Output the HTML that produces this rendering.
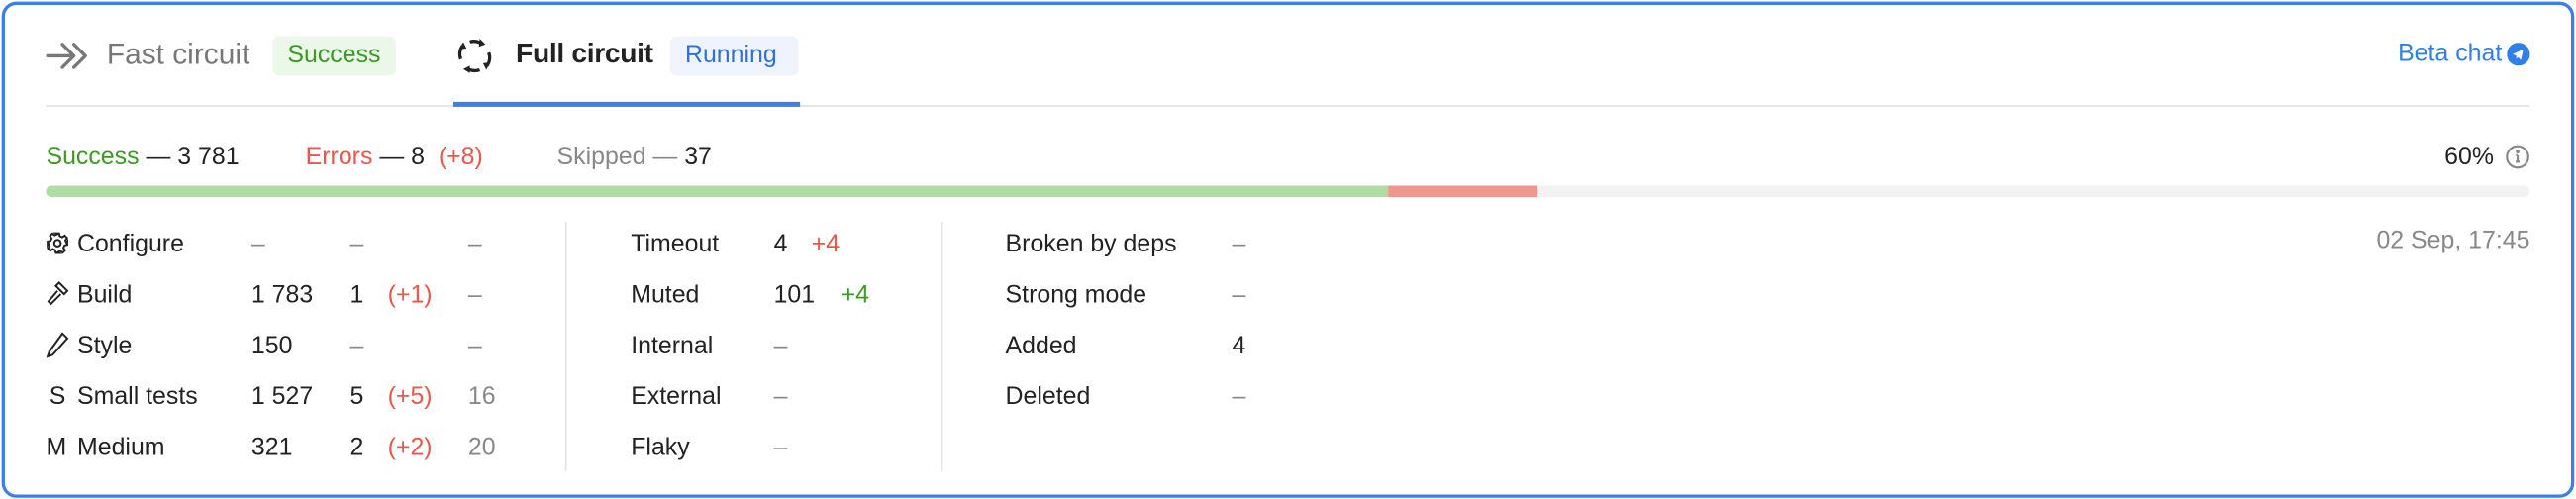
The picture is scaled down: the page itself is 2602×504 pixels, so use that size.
<!DOCTYPE html>
<html><head><meta charset="utf-8"><style>
html,body{margin:0;padding:0;background:#fff;}
body{width:2602px;height:504px;overflow:hidden;}
#w{position:absolute;left:0;top:0;width:1568px;height:304px;transform:scale(1.6594);transform-origin:0 0;font-family:"Liberation Sans",sans-serif;font-size:15px;color:#222;}
.box{position:absolute;left:1px;top:1px;width:1562px;height:298px;border:2px solid #3a80e8;border-radius:9px;}
.a{position:absolute;white-space:nowrap;line-height:18px;}
.g{color:#3a9a22}.r{color:#e8574a}.gr{color:#888}
.dv{position:absolute;width:1px;background:#e4e4e4;top:135px;height:152px;}
</style></head><body><div id="w">
<div class="box"></div>
<svg style="position:absolute;left:28px;top:25px" width="25" height="18" viewBox="0 0 25 18" fill="none" stroke="#777" stroke-width="2" stroke-linecap="round" stroke-linejoin="round"><path d="M1 9h15M10 2l7 7-7 7M17 2l7 7-7 7"/></svg>
<div class="a gr" style="left:65px;top:24px;font-size:18px;color:#777">Fast circuit</div>
<div class="a" style="left:166px;top:22px;width:75px;height:24px;background:#ebf7e9;border-radius:4px;"></div>
<div class="a g" style="left:175px;top:25px;">Success</div>
<svg style="position:absolute;left:277px;top:22px" width="24" height="24" viewBox="0 0 24 24" fill="none" stroke="#222" stroke-width="2"><path d="M9 3.5A8.5 8.5 0 0 1 16 4.5M20.5 10a8.5 8.5 0 0 1-1 8M15 20.5a8.5 8.5 0 0 1-7-.5M3.5 14a8.5 8.5 0 0 1 1-8"/><path d="M15 1.5l3.5 3.5-4 1.5zM21.5 16l-2.5 4.5-2-4zM9 22.5l-4-2.5 4-2zM2.5 8l2.5-4.5 2 4z" fill="#222" stroke="none"/></svg>
<div class="a" style="left:314px;top:24px;font-size:17px;font-weight:bold;letter-spacing:-0.2px;color:#222">Full circuit</div>
<div class="a" style="left:408px;top:22px;width:78px;height:24px;background:#eef3fc;border-radius:4px;"></div>
<div class="a" style="left:417px;top:25px;color:#3070d8">Running</div>
<div class="a" style="left:28px;top:64px;width:1512px;height:1px;background:#e0e0e0"></div>
<div class="a" style="left:276px;top:62px;width:211px;height:3px;background:#3a80e8"></div>
<div class="a" style="right:45px;top:24px;color:#2f7fe8">Beta chat</div>
<svg style="position:absolute;left:1526px;top:26px" width="14" height="14" viewBox="0 0 14 14"><circle cx="7" cy="7" r="7" fill="#2f7fe8"/><path d="M3.5 7l6.5-3-1.5 6.5-1.8-1.8-1 1.3v-2z" fill="#fff"/></svg>
<div class="a" style="left:28px;top:87px"><span class="g">Success</span> — 3 781</div>
<div class="a" style="left:186px;top:87px"><span class="r">Errors</span> — 8 &nbsp;<span class="r">(+8)</span></div>
<div class="a" style="left:339px;top:87px"><span class="gr">Skipped —</span> 37</div>
<div class="a" style="right:50px;top:87px">60%</div>
<svg style="position:absolute;left:1525px;top:88px" width="15" height="15" viewBox="0 0 15 15" fill="none" stroke="#888" stroke-width="1.3"><circle cx="7.5" cy="7.5" r="6.5"/><path d="M7.5 6.5v4M6.3 10.5h2.4M6.5 6.5h1" /><circle cx="7.5" cy="4.3" r=".5" fill="#888"/></svg>
<div class="a" style="left:28px;top:113px;width:1512px;height:7px;background:#f2f2f2;border-radius:4px;overflow:hidden"><div style="position:absolute;left:0;width:817px;height:7px;background:#b0dca4"></div><div style="position:absolute;left:817px;width:91px;height:7px;background:#f0968a"></div></div>
<svg style="position:absolute;left:28px;top:141px" width="14" height="14" viewBox="0 0 14 14" fill="none" stroke="#222" stroke-width="1.2"><circle cx="7" cy="7" r="2"/><path d="M6 1h2l.4 1.7 1.5.7 1.5-1 1.4 1.4-1 1.5.7 1.5L13 6v2l-1.7.4-.7 1.5 1 1.5-1.4 1.4-1.5-1-1.5.7L8 13H6l-.4-1.7-1.5-.7-1.5 1-1.4-1.4 1-1.5-.7-1.5L1 8V6l1.7-.4.7-1.5-1-1.5 1.4-1.4 1.5 1 1.5-.7z"/></svg>
<svg style="position:absolute;left:28px;top:171px" width="14" height="16" viewBox="0 0 14 16" fill="none" stroke="#222" stroke-width="1.2"><path d="M8 1l5 5-2 2-5-5zM7 6L1.5 12.5l1.5 1.5L9 8"/></svg>
<svg style="position:absolute;left:28px;top:202px" width="14" height="16" viewBox="0 0 14 16" fill="none" stroke="#222" stroke-width="1.2"><path d="M10 1l3 3-9 10-3 1 1-3z"/></svg>
<div class="a" style="left:30px;top:233px">S</div>
<div class="a" style="left:28px;top:264px">M</div>
<div class="a" style="left:47px;top:140px">Configure</div>
<div class="a" style="left:47px;top:171px">Build</div>
<div class="a" style="left:47px;top:202px">Style</div>
<div class="a" style="left:47px;top:233px">Small tests</div>
<div class="a" style="left:47px;top:264px">Medium</div>
<div class="a gr" style="left:153px;top:140px">–</div><div class="a gr" style="left:213px;top:140px">–</div><div class="a gr" style="left:285px;top:140px">–</div>
<div class="a" style="left:153px;top:171px">1 783</div><div class="a" style="left:213px;top:171px">1</div><div class="a r" style="left:236px;top:171px">(+1)</div><div class="a gr" style="left:285px;top:171px">–</div>
<div class="a" style="left:153px;top:202px">150</div><div class="a gr" style="left:213px;top:202px">–</div><div class="a gr" style="left:285px;top:202px">–</div>
<div class="a" style="left:153px;top:233px">1 527</div><div class="a" style="left:213px;top:233px">5</div><div class="a r" style="left:236px;top:233px">(+5)</div><div class="a gr" style="left:285px;top:233px">16</div>
<div class="a" style="left:153px;top:264px">321</div><div class="a" style="left:213px;top:264px">2</div><div class="a r" style="left:236px;top:264px">(+2)</div><div class="a gr" style="left:285px;top:264px">20</div>
<div class="dv" style="left:344px"></div>
<div class="a" style="left:384px;top:140px">Timeout</div><div class="a" style="left:471px;top:140px">4</div><div class="a r" style="left:494px;top:140px">+4</div>
<div class="a" style="left:384px;top:171px">Muted</div><div class="a" style="left:471px;top:171px">101</div><div class="a g" style="left:512px;top:171px">+4</div>
<div class="a" style="left:384px;top:202px">Internal</div><div class="a gr" style="left:471px;top:202px">–</div>
<div class="a" style="left:384px;top:233px">External</div><div class="a gr" style="left:471px;top:233px">–</div>
<div class="a" style="left:384px;top:264px">Flaky</div><div class="a gr" style="left:471px;top:264px">–</div>
<div class="dv" style="left:573px"></div>
<div class="a" style="left:612px;top:140px">Broken by deps</div><div class="a gr" style="left:750px;top:140px">–</div>
<div class="a" style="left:612px;top:171px">Strong mode</div><div class="a gr" style="left:750px;top:171px">–</div>
<div class="a" style="left:612px;top:202px">Added</div><div class="a" style="left:750px;top:202px">4</div>
<div class="a" style="left:612px;top:233px">Deleted</div><div class="a gr" style="left:750px;top:233px">–</div>
<div class="a gr" style="right:28px;top:138px">02 Sep, 17:45</div>
</div></body></html>
